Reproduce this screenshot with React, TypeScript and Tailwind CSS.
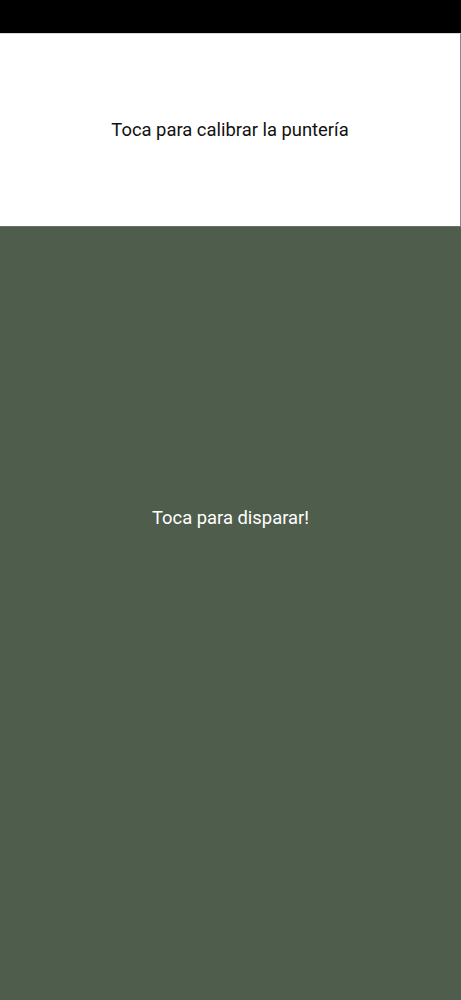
export default function App() {
  return (
    <div className="flex flex-col h-[1000px] w-full font-['Roboto',sans-serif]">
      <div className="h-[33px] bg-black"></div>
      <div className="h-[194px] bg-white border-t border-[#d6d6d6] border-r border-r-[#8a8a8a] border-b border-b-[#6e6e6e] flex items-center justify-center">
        <p className="text-[18.4px] text-[#111]">Toca para calibrar la puntería</p>
      </div>
      <div className="flex-1 bg-[#4f5d4c] flex justify-center pt-[277px]">
        <p className="text-[18.4px] text-white h-fit">Toca para disparar!</p>
      </div>
    </div>
  );
}
